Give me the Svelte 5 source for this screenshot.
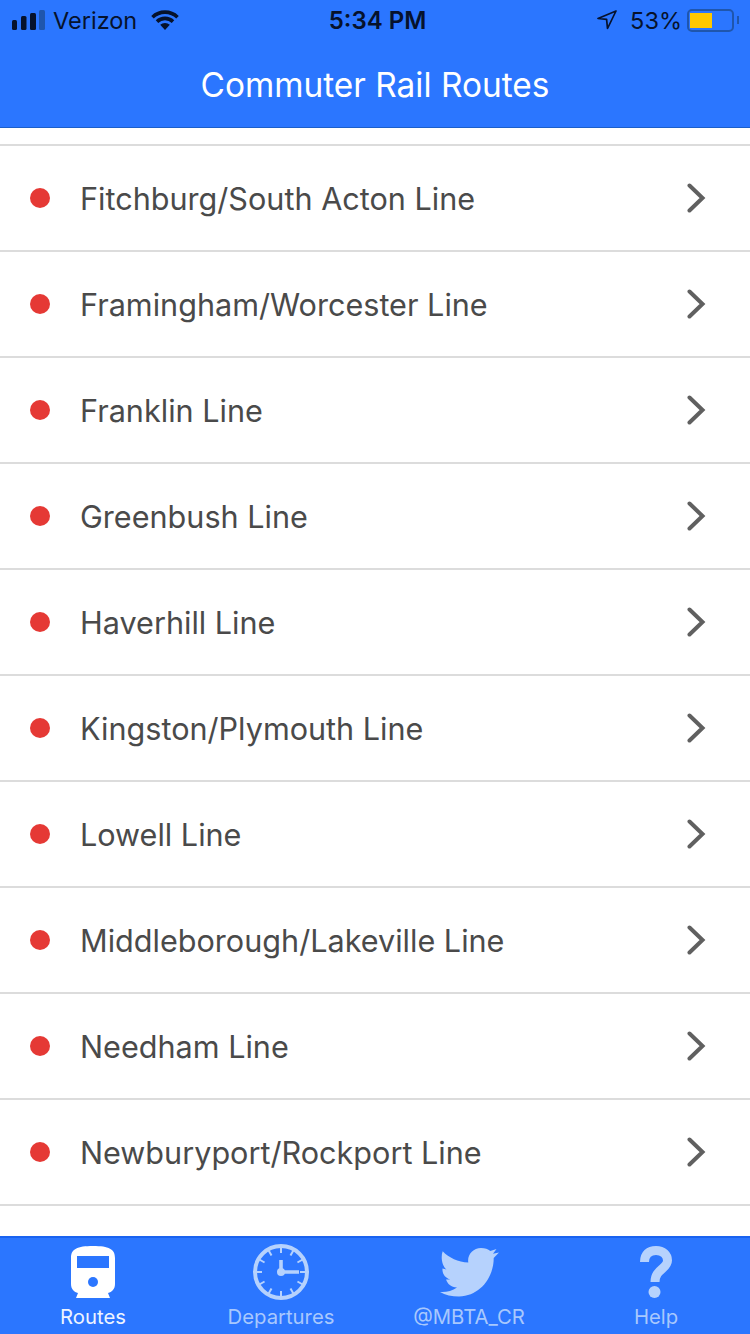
<script>
	const routes = [
		'Fitchburg/South Acton Line',
		'Framingham/Worcester Line',
		'Franklin Line',
		'Greenbush Line',
		'Haverhill Line',
		'Kingston/Plymouth Line',
		'Lowell Line',
		'Middleborough/Lakeville Line',
		'Needham Line',
		'Newburyport/Rockport Line'
	];

	const ticks = Array.from({ length: 12 }, (_, i) => i * 30);
</script>

<div class="screen">
	<header>
		<div class="status">
			<div class="side">
				<svg class="signal" width="33" height="20" viewBox="0 0 33 20">
					<rect x="0" y="10" width="5" height="10" rx="1.5" fill="#06122c" />
					<rect x="9" y="6" width="5.5" height="14" rx="1.5" fill="#06122c" />
					<rect x="18" y="3" width="6" height="17" rx="1.5" fill="#06122c" />
					<rect x="27" y="0" width="6" height="20" rx="1.5" fill="#1f56ad" />
				</svg>
				<span class="carrier">Verizon</span>
				<svg class="wifi" width="28" height="20" viewBox="0 0 28 20">
					<path d="M14 20 9.2 14.8a7 7 0 0 1 9.6 0Z" fill="#06122c" />
					<path d="M1.5 7.2a18 18 0 0 1 25 0M6 11.6a11.6 11.6 0 0 1 16 0" fill="none" stroke="#06122c" stroke-width="3.6" />
				</svg>
			</div>
			<span class="time">5:34 PM</span>
			<div class="side right">
				<svg width="20" height="20" viewBox="0 0 20 20">
					<path d="M19 1 1 8.5l8.6.9L10.5 18.5Z" fill="none" stroke="#06122c" stroke-width="1.7" stroke-linejoin="round" />
				</svg>
				<span class="pct">53%</span>
				<div class="battery">
					<div class="cell"><div class="charge"></div></div>
					<div class="nub"></div>
				</div>
			</div>
		</div>
		<h1>Commuter Rail Routes</h1>
	</header>

	<main>
		<ul>
			{#each routes as route}
				<li>
					<span class="dot"></span>
					<span class="name">{route}</span>
					<svg class="chevron" width="20" height="30" viewBox="0 0 20 30">
						<path d="M3.5 2.5 16.5 15 3.5 27.5" fill="none" stroke="#606060" stroke-width="4" stroke-linecap="round" />
					</svg>
				</li>
			{/each}
			<li></li>
		</ul>
	</main>

	<nav>
		<div class="tab active">
			<div class="icon">
				<svg width="44" height="52" viewBox="0 0 44 52">
					<path d="M0 12C0 3 6 0 22 0s22 3 22 12v26c0 5-3 8-7 9l2 5H5l2-5c-4-1-7-4-7-9Z" fill="#fff" />
					<rect x="6" y="10" width="32" height="12" fill="#2b76ff" />
					<circle cx="22" cy="36" r="5" fill="#2b76ff" />
				</svg>
			</div>
			<span>Routes</span>
		</div>
		<div class="tab">
			<div class="icon">
				<svg width="56" height="56" viewBox="0 0 56 56">
					<circle cx="28" cy="28" r="26" fill="none" stroke="#b6d2fd" stroke-width="4" />
					{#each ticks as deg}
						<rect x="27" y="3" width="2" height="6" fill="#b6d2fd" transform="rotate({deg} 28 28)" />
					{/each}
					<path d="M28 16v12h18" fill="none" stroke="#b6d2fd" stroke-width="3.6" />
					<circle cx="28" cy="28" r="4" fill="#b6d2fd" />
				</svg>
			</div>
			<span>Departures</span>
		</div>
		<div class="tab">
			<div class="icon">
				<svg width="59" height="49" viewBox="0 0 59 49">
					<path d="M2.7 3.3C9 10 18 14 28.3 14.6 27 7 33 0 41 0c4 0 7 1 9.3 3l6.2-2L53 5.8l6-1.3-5.3 5.5C54 28 41 48 19 48.5 12 48.5 5 47 0 44c6 .5 12-1 17-4.5-6-.5-9.5-3.5-11-8h4.5C5 30 2 25.5 2.5 20.5l4 1C2 18 .5 9 2.7 3.3Z" fill="#b6d2fd" />
				</svg>
			</div>
			<span>@MBTA_CR</span>
		</div>
		<div class="tab">
			<div class="icon">
				<svg width="32" height="52" viewBox="0 0 32 52">
					<path d="M4.5 16C4.5 8 9 4.5 16 4.5c7 0 11.5 4.500 11.5 10C27.5 23 15 23 15 36" fill="none" stroke="#b6d2fd" stroke-width="9" />
					<circle cx="14.5" cy="46" r="6" fill="#b6d2fd" />
				</svg>
			</div>
			<span>Help</span>
		</div>
	</nav>
</div>

<style>
	:global(body) {
		margin: 0;
	}
	.screen {
		width: 750px;
		height: 1334px;
		display: flex;
		flex-direction: column;
		font-family: Inter, "Liberation Sans", sans-serif;
		background: #fff;
		overflow: hidden;
	}
	header {
		height: 127px;
		flex: none;
		background: #2b76ff;
		border-bottom: 1px solid #1c5fc9;
	}
	.status {
		height: 40px;
		padding: 0 11px 0 12px;
		display: flex;
		align-items: center;
		justify-content: space-between;
		color: #06122c;
		font-size: 23.5px;
	}
	.side {
		width: 250px;
		display: flex;
		align-items: center;
	}
	.side.right {
		justify-content: flex-end;
	}
	.carrier {
		margin-left: 8px;
	}
	.wifi {
		margin-left: 14px;
	}
	.time {
		margin-left: 4px;
		font-size: 24px;
		font-weight: 600;
	}
	.pct {
		margin-left: 13px;
	}
	.battery {
		margin-left: 5px;
		display: flex;
		align-items: center;
	}
	.cell {
		width: 47px;
		height: 23px;
		box-sizing: border-box;
		border: 2px solid #1f56ad;
		border-radius: 5px;
		padding: 2px 0 2px 1px;
	}
	.charge {
		width: 22px;
		height: 100%;
		background: #ffc800;
	}
	.nub {
		width: 2px;
		height: 8px;
		margin-left: 3px;
		background: #1f56ad;
	}
	h1 {
		margin: 0;
		height: 87px;
		line-height: 90px;
		text-align: center;
		color: #fff;
		font-size: 33.4px;
		font-weight: 400;
	}
	main {
		flex: 1;
		overflow: hidden;
		padding-top: 16px;
	}
	ul {
		margin: 0;
		padding: 0;
		list-style: none;
	}
	li {
		height: 106px;
		box-sizing: border-box;
		border-top: 2px solid #dcdcdc;
		display: flex;
		align-items: center;
		padding: 0 44px 0 30px;
		color: #4a4a4a;
		font-size: 30.6px;
	}
	.dot {
		width: 20px;
		height: 20px;
		border-radius: 50%;
		background: #e53935;
		flex: none;
	}
	.name {
		flex: 1;
		margin-left: 30px;
	}
	nav {
		height: 98px;
		flex: none;
		box-sizing: border-box;
		background: #2b76ff;
		border-top: 2px solid #1a63f0;
		display: grid;
		grid-template-columns: 186px 190px 186px 188px;
	}
	.tab {
		display: flex;
		flex-direction: column;
		align-items: center;
		color: #a8c8fd;
		font-size: 20.3px;
	}
	.icon {
		height: 60px;
		margin-top: 4px;
		display: flex;
		align-items: center;
	}
	.tab span {
		margin-top: 3px;
		line-height: 24px;
	}
	.tab.active {
		color: #eef4ff;
	}
</style>
